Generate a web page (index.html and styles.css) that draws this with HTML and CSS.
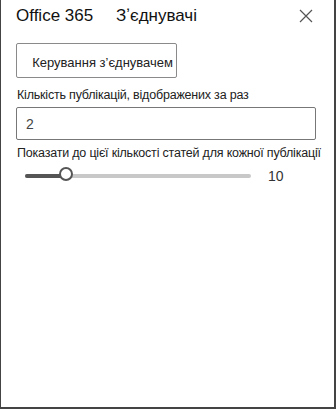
FILE: index.html
```html
<!DOCTYPE html>
<html lang="uk">
<head>
    <meta charset="UTF-8">
    <meta name="viewport" content="width=device-width, initial-scale=1.0">
    <title>Office 365 З'єднувачі</title>
    <link rel="stylesheet" href="styles.css">
</head>
<body>
    <div class="panel">
        <div class="panel-header">
            <h1 class="panel-title">Office 365 <span class="title-part">Зʼєднувачі</span></h1>
            <button class="close-btn" aria-label="Закрити">
                <svg width="14" height="14" viewBox="0 0 14 14">
                    <path d="M1 1 L13 13 M13 1 L1 13" stroke="#555" stroke-width="1.2" fill="none"/>
                </svg>
            </button>
        </div>

        <button class="manage-btn">Керування зʼєднувачем</button>

        <div class="field">
            <label class="field-label" for="count">Кількість публікацій, відображених за раз</label>
            <input class="field-input" type="text" id="count" value="2">
        </div>

        <div class="field">
            <div class="field-label">Показати до цієї кількості статей для кожної публікації</div>
            <div class="slider-row">
                <div class="slider">
                    <div class="slider-fill"></div>
                    <div class="slider-thumb"></div>
                </div>
                <span class="slider-value">10</span>
            </div>
        </div>
    </div>
</body>
</html>
```

FILE: styles.css
```css
html, body {
    margin: 0;
    padding: 0;
    height: 100%;
}
body {
    font-family: "Liberation Sans", Arial, sans-serif;
    color: #222;
    background: #fff;
}
.panel {
    box-sizing: border-box;
    height: 409px;
    border-left: 1px solid #444;
    border-right: 2px solid #444;
    border-bottom: 2px solid #444;
    padding: 0 19px 0 14px;
}
.panel-header {
    display: flex;
    justify-content: space-between;
    align-items: center;
    height: 32px;
    padding-top: 0;
}
.panel-title {
    margin: 0;
    font-weight: normal;
    font-size: 17px;
    color: #111;
    padding-left: 1px;
}
.title-part {
    margin-left: 18px;
}
.close-btn {
    background: none;
    border: none;
    padding: 0;
    margin-right: 2px;
    width: 14px;
    height: 14px;
    display: flex;
}
.manage-btn {
    margin-top: 11px;
    margin-left: 1px;
    width: 161px;
    height: 35px;
    box-sizing: border-box;
    background: #fff;
    border: 1px solid #8a8a8a;
    border-radius: 2px;
    font-family: inherit;
    font-size: 13px;
    color: #222;
    text-align: right;
    padding: 3px 3px 0 0;
}
.field {
    margin-top: 10px;
}
.field + .field {
    margin-top: 6px;
}
.field-label {
    display: block;
    font-size: 12.5px;
    color: #222;
    padding-left: 2px;
    margin-bottom: 5px;
    white-space: nowrap;
    letter-spacing: -0.2px;
}
.field-input {
    box-sizing: border-box;
    width: 300px;
    height: 33px;
    margin-left: 1px;
    border: 1px solid #777;
    border-radius: 2px;
    padding: 0 9px;
    font-family: inherit;
    font-size: 14px;
    color: #444;
}
.slider-row {
    display: flex;
    align-items: center;
    height: 22px;
    padding-left: 10px;
}
.slider {
    position: relative;
    width: 226px;
    height: 4px;
    background: #c8c8c8;
    border-radius: 2px;
}
.slider-fill {
    width: 38px;
    height: 4px;
    background: #555;
    border-radius: 2px;
}
.slider-thumb {
    position: absolute;
    left: 34px;
    top: -7px;
    width: 14px;
    height: 14px;
    box-sizing: border-box;
    border: 2px solid #555;
    border-radius: 50%;
    background: #fff;
}
.slider-value {
    margin-left: 17px;
    font-size: 14px;
    color: #333;
}
```
